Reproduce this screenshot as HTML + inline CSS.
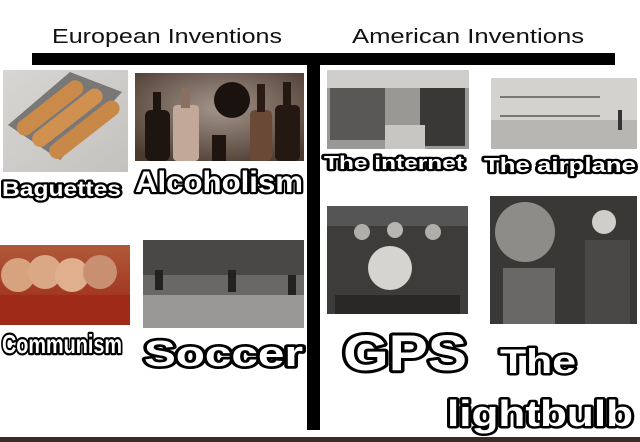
<!DOCTYPE html>
<html><head><meta charset="utf-8"><style>
html,body{margin:0;padding:0;background:#fff;}
body{width:640px;height:442px;position:relative;overflow:hidden;font-family:"Liberation Sans",sans-serif;}
.a{position:absolute;}
</style></head><body>
<svg class="a" style="left:0;top:0" width="640" height="442" viewBox="0 0 640 442">
<defs>
<linearGradient id="bag" x1="0" y1="0" x2="1" y2="1"><stop offset="0" stop-color="#d8d6d2"/><stop offset="1" stop-color="#c4c2be"/></linearGradient>
<radialGradient id="alc" cx="0.5" cy="0.4" r="0.7"><stop offset="0" stop-color="#a4958a"/><stop offset="1" stop-color="#4a3a30"/></radialGradient>
<linearGradient id="com" x1="0" y1="0" x2="0" y2="1"><stop offset="0" stop-color="#b05a3a"/><stop offset="1" stop-color="#9a2414"/></linearGradient>
</defs>
<text x="52" y="43" font-family="Liberation Sans" font-size="20" fill="#111" textLength="230" lengthAdjust="spacingAndGlyphs">European Inventions</text>
<text x="352" y="43" font-family="Liberation Sans" font-size="20" fill="#111" textLength="232" lengthAdjust="spacingAndGlyphs">American Inventions</text>
<rect x="32" y="53" width="583" height="12" fill="#000"/>
<rect x="307" y="53" width="13" height="377" fill="#000"/>
<rect x="0" y="437" width="640" height="5" fill="#3a2a28"/>
<rect x="3" y="70" width="125" height="102" fill="url(#bag)"/>
<polygon points="8,125 70,72 122,92 60,160" fill="#7a7876"/>
<rect x="10" y="100" width="80" height="16" rx="8" fill="#c98a4a" transform="rotate(-38 50 108)"/>
<rect x="25" y="110" width="85" height="16" rx="8" fill="#d09050" transform="rotate(-38 67 118)"/>
<rect x="42" y="122" width="85" height="16" rx="8" fill="#c88848" transform="rotate(-38 84 130)"/>
<rect x="135" y="73" width="169" height="88" fill="url(#alc)"/>
<rect x="145" y="110" width="25" height="51" rx="6" fill="#1e1410"/><rect x="153" y="92" width="8" height="22" fill="#1e1410"/>
<rect x="173" y="105" width="26" height="56" rx="4" fill="#c2a898"/><rect x="181" y="88" width="9" height="20" fill="#8a7060"/>
<circle cx="232" cy="100" r="18" fill="#1a120e"/>
<rect x="250" y="110" width="22" height="51" rx="5" fill="#6a4a36"/><rect x="257" y="84" width="8" height="28" fill="#2a1c14"/>
<rect x="275" y="105" width="25" height="56" rx="5" fill="#241812"/><rect x="283" y="82" width="8" height="26" fill="#241812"/>
<rect x="212" y="135" width="14" height="26" fill="#1e1410"/>
<rect x="327" y="70" width="142" height="79" fill="#9a9894"/>
<rect x="327" y="70" width="142" height="18" fill="#d0cecb"/>
<rect x="330" y="88" width="55" height="52" fill="#5a5856"/>
<rect x="420" y="88" width="45" height="58" fill="#3a3836"/>
<rect x="385" y="125" width="40" height="24" fill="#c8c6c2"/>
<rect x="491" y="78" width="146" height="71" fill="#d4d2cf"/>
<rect x="491" y="120" width="146" height="29" fill="#b8b6b2"/>
<rect x="500" y="96" width="100" height="2" fill="#777"/><rect x="500" y="115" width="100" height="2" fill="#777"/>
<rect x="618" y="110" width="4" height="20" fill="#333"/>
<rect x="0" y="245" width="130" height="80" fill="url(#com)"/>
<circle cx="18" cy="275" r="17" fill="#d7a27e"/><circle cx="45" cy="272" r="17" fill="#dba886"/><circle cx="72" cy="275" r="17" fill="#e0b08e"/><circle cx="100" cy="272" r="17" fill="#c89070"/>
<rect x="0" y="295" width="130" height="30" fill="#a02a18"/>
<rect x="143" y="240" width="161" height="88" fill="#6a6866"/>
<rect x="143" y="240" width="161" height="35" fill="#4a4846"/>
<rect x="143" y="295" width="161" height="33" fill="#9a9896"/>
<rect x="228" y="270" width="8" height="22" fill="#222"/><rect x="155" y="270" width="8" height="20" fill="#222"/><rect x="288" y="275" width="8" height="20" fill="#222"/>
<rect x="327" y="206" width="141" height="108" fill="#3e3c3a"/>
<rect x="327" y="206" width="141" height="20" fill="#555"/>
<circle cx="390" cy="268" r="22" fill="#d6d4d0"/>
<rect x="335" y="295" width="125" height="19" fill="#2a2826"/>
<circle cx="362" cy="232" r="8" fill="#b0aeaa"/><circle cx="395" cy="230" r="8" fill="#b8b6b2"/><circle cx="433" cy="232" r="8" fill="#b0aeaa"/>
<rect x="490" y="196" width="147" height="128" fill="#3a3836"/>
<circle cx="525" cy="232" r="30" fill="#8e8c88"/>
<rect x="503" y="268" width="52" height="56" fill="#6a6866"/>
<circle cx="604" cy="222" r="12" fill="#d0ceca"/>
<rect x="585" y="240" width="45" height="84" fill="#4a4846"/>
<g font-family="Liberation Sans" font-weight="bold" fill="#fff" stroke="#000" stroke-width="4.5" paint-order="stroke" stroke-linejoin="round">
<text x="2" y="196" font-size="21" textLength="119" lengthAdjust="spacingAndGlyphs">Baguettes</text>
<text x="135" y="192" font-size="30" textLength="168" lengthAdjust="spacingAndGlyphs">Alcoholism</text>
<text x="324" y="169" font-size="18" textLength="140" lengthAdjust="spacingAndGlyphs">The internet</text>
<text x="484" y="172" font-size="20" textLength="152" lengthAdjust="spacingAndGlyphs">The airplane</text>
<text x="2" y="353" font-size="26" textLength="120" lengthAdjust="spacingAndGlyphs">Communism</text>
<text x="144" y="366" font-size="36" stroke-width="5.5" textLength="159" lengthAdjust="spacingAndGlyphs">Soccer</text>
<text x="343" y="370" font-size="50" stroke-width="6" textLength="124" lengthAdjust="spacingAndGlyphs">GPS</text>
<text x="500" y="373" font-size="34" stroke-width="5" textLength="76" lengthAdjust="spacingAndGlyphs">The</text>
<text x="447" y="426" font-size="36" stroke-width="5" textLength="186" lengthAdjust="spacingAndGlyphs">lightbulb</text>
</g>
</svg>
</body></html>
